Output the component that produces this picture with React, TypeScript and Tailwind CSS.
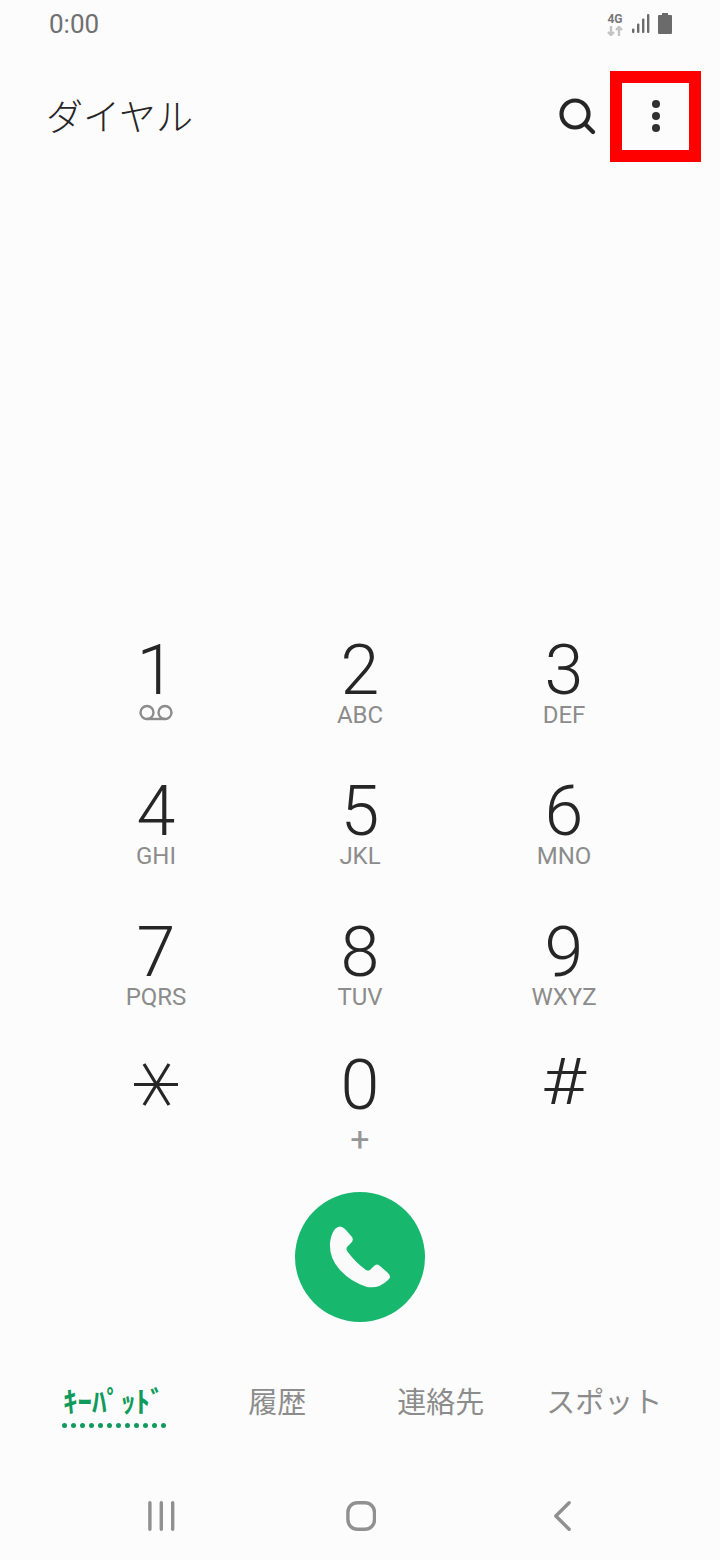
const keys = [
  { digit: '1', sub: 'voicemail' },
  { digit: '2', sub: 'ABC' },
  { digit: '3', sub: 'DEF' },
  { digit: '4', sub: 'GHI' },
  { digit: '5', sub: 'JKL' },
  { digit: '6', sub: 'MNO' },
  { digit: '7', sub: 'PQRS' },
  { digit: '8', sub: 'TUV' },
  { digit: '9', sub: 'WXYZ' },
];

function VoicemailIcon() {
  return (
    <svg width="36" height="18" viewBox="0 0 36 18" fill="none" stroke="#8c8c8c" strokeWidth="2.4" className="mt-[-6px]">
      <circle cx="9" cy="8.5" r="6.5" />
      <circle cx="27" cy="8.5" r="6.5" />
      <path d="M9 15h18" />
    </svg>
  );
}

function StarIcon() {
  return (
    <svg width="46" height="44" viewBox="0 0 46 44" fill="none" stroke="#262626" strokeWidth="3.2">
      <path d="M1 21.5h44M11 1l25 41M36 1L11 42" />
    </svg>
  );
}

function StatusIcons() {
  return (
    <div className="flex items-start">
      <div className="flex w-[16px] flex-col items-center">
        <span className="text-[12px] font-bold leading-[12px] text-[#777777]">4G</span>
        <svg width="16" height="10" viewBox="0 0 16 10" fill="none" stroke="#c4c4c4" strokeWidth="2.4" className="mt-[1px]">
          <path d="M4 0v9M1 6l3 3 3-3M12 10V1M9 4l3-3 3 3" />
        </svg>
      </div>
      <svg width="18" height="20" viewBox="0 0 18 20" fill="#6b6b6b" className="ml-[9px] mt-[1px]">
        <rect x="0" y="14.5" width="2.4" height="4.5" rx="1" />
        <rect x="5" y="9.5" width="2.4" height="9.5" rx="1" />
        <rect x="10" y="4.5" width="2.4" height="14.5" rx="1" />
        <rect x="15" y="0" width="2.4" height="19" rx="1" />
      </svg>
      <svg width="14" height="21" viewBox="0 0 14 21" fill="#6b6b6b" className="ml-[8px]">
        <path d="M4 0h6v2h3a1 1 0 0 1 1 1v17a1 1 0 0 1-1 1H1a1 1 0 0 1-1-1V3a1 1 0 0 1 1-1h3z" />
      </svg>
    </div>
  );
}

export default function App() {
  return (
    <div className="relative flex h-[1560px] w-[720px] flex-col overflow-hidden bg-[#fcfcfc] font-['Roboto','Noto_Sans_CJK_JP',sans-serif]">
      {/* Status bar */}
      <div className="flex h-[48px] items-start justify-between pl-[49px] pr-[48px] pt-[12px]">
        <span className="text-[26px] leading-[24px] text-[#707070]">0:00</span>
        <div className="mt-[1px]">
          <StatusIcons />
        </div>
      </div>

      {/* Header */}
      <div className="flex h-[140px] items-start justify-between pl-[46px] pr-[60px] pt-[44px]">
        <h1 className="font-['Noto_Sans_CJK_JP',sans-serif] text-[37px] font-light leading-[46px] text-[#262626]">ダイヤル</h1>
        <div className="flex items-start">
          <svg width="38" height="38" viewBox="0 0 38 38" fill="none" stroke="#262626" strokeWidth="4.2" className="mt-[5px]" strokeLinecap="round">
            <circle cx="17" cy="17" r="13.5" />
            <path d="M27 27l8 8" />
          </svg>
          <div className="ml-[56px] mt-[8px] flex flex-col gap-[4px]">
            <span className="size-[8px] rounded-full bg-[#303030]" />
            <span className="size-[8px] rounded-full bg-[#303030]" />
            <span className="size-[8px] rounded-full bg-[#303030]" />
          </div>
        </div>
      </div>

      {/* Red highlight around the menu button */}
      <div className="absolute left-[610px] top-[71px] h-[91px] w-[91px] border-[12px] border-[#ff0000]" />

      <div className="flex-1" />

      {/* Keypad */}
      <div className="grid grid-cols-3 px-[54px]">
        {keys.map((k) => (
          <div key={k.digit} className="flex h-[141px] flex-col items-center pt-[10px]">
            <span className="text-[70px] font-[350] leading-[80px] text-[#262626]">{k.digit}</span>
            {k.sub === 'voicemail' ? (
              <VoicemailIcon />
            ) : (
              <span className="mt-[-7px] text-[24px] leading-[24px] text-[#8c8c8c]">{k.sub}</span>
            )}
          </div>
        ))}
        <div className="flex h-[150px] flex-col items-center pt-[20px]">
          <StarIcon />
        </div>
        <div className="flex h-[150px] flex-col items-center pt-[2px]">
          <span className="text-[70px] font-[350] leading-[80px] text-[#262626]">0</span>
          <span className="mt-[-2px] text-[34px] font-normal leading-[32px] text-[#969696]">+</span>
        </div>
        <div className="flex h-[150px] flex-col items-center">
          <span className="inline-block scale-x-[1.2] text-[64px] font-light leading-[80px] text-[#262626]">#</span>
        </div>
      </div>

      {/* Call button */}
      <div className="mt-[-1px] flex justify-center">
        <div className="size-[130px] rounded-full bg-[#18b76e]">
          <svg width="130" height="130" viewBox="0 0 130 130" fill="#fafafa">
            <path d="M40 37Q45 32 50 37L57 45Q59 48 56 51L52 55Q51 57 52 59Q61 71 71 78Q73 79 75 78L79 74Q82 71 85 74L93 81Q97 85 93 88Q84 97 72 95Q56 90 45 78Q34 66 35 51Q36 42 40 37Z" />
          </svg>
        </div>
      </div>

      {/* Tabs */}
      <div className="mt-[54px] grid h-[80px] grid-cols-4 pl-[32px] pr-[34px] pt-[4px] font-['Noto_Sans_CJK_JP',sans-serif] text-[29px] leading-[40px] text-[#8c8c8c]">
        <div className="flex flex-col items-center">
          <span className="font-bold text-[#109a5b]">ｷｰﾊﾟｯﾄﾞ</span>
          <div className="mt-[3px] flex gap-[4px]">
            {Array.from({ length: 12 }).map((_, i) => (
              <span key={i} className="size-[5px] rounded-full bg-[#109a5b]" />
            ))}
          </div>
        </div>
        <span className="text-center">履歴</span>
        <span className="text-center">連絡先</span>
        <span className="text-center">スポット</span>
      </div>

      {/* Navigation bar */}
      <div className="flex h-[104px] items-start px-[148px] pt-[44px]">
        <svg width="28" height="32" viewBox="0 0 28 32" fill="none" stroke="#909090" strokeWidth="3.6" strokeLinecap="round">
          <path d="M2 2v28M14 2v28M26 2v28" />
        </svg>
        <svg width="32" height="32" viewBox="0 0 32 32" fill="none" stroke="#909090" strokeWidth="3.6" className="ml-[171px]">
          <rect x="2" y="2" width="28" height="28" rx="10" />
        </svg>
        <svg width="20" height="32" viewBox="0 0 20 32" fill="none" stroke="#909090" strokeWidth="3.6" strokeLinecap="round" strokeLinejoin="round" className="ml-[177px]">
          <path d="M17 2L3 16l14 14" />
        </svg>
      </div>
    </div>
  );
}
